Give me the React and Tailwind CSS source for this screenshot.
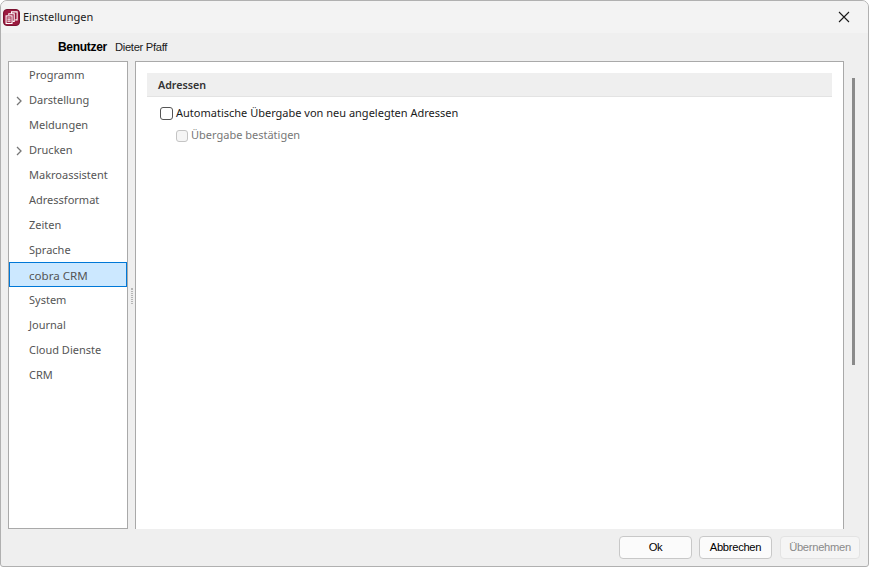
const items = [
  { label: "Programm" },
  { label: "Darstellung", arrow: true },
  { label: "Meldungen" },
  { label: "Drucken", arrow: true },
  { label: "Makroassistent" },
  { label: "Adressformat" },
  { label: "Zeiten" },
  { label: "Sprache" },
  { label: "cobra CRM", active: true },
  { label: "System" },
  { label: "Journal" },
  { label: "Cloud Dienste" },
  { label: "CRM" },
];

function AppIcon() {
  return (
    <div className="w-[17px] h-[17px] rounded-[4px] bg-[#9b1b3f] border border-[#7a1230] flex items-center justify-center">
      <svg width="13" height="13" viewBox="0 0 12 12" fill="none" stroke="#fff" strokeWidth="1">
        <path d="M6 2.5V.8h5.2v7.4H9.5" />
        <path d="M3.5 4V2.6h5v7H7" />
        <rect x="1" y="4.5" width="5.5" height="7" fill="#9b1b3f" />
        <path d="M2.2 6.5h3M2.2 8h3M2.2 9.5h3" />
      </svg>
    </div>
  );
}

export default function App() {
  return (
    <div className="w-[869px] h-[567px] flex flex-col bg-[#efefef] border border-[#b0b0b0] rounded-t-[7px] rounded-b-[3px] overflow-hidden text-[11px] text-[#1a1a1a] font-['Noto_Sans',sans-serif]">
      {/* title bar */}
      <div className="h-[32px] shrink-0 flex items-center pl-[2px] pr-[18px] bg-[#f3f3f3]">
        <AppIcon />
        <span className="ml-[3px] mb-[2px] text-[11px] leading-none">Einstellungen</span>
        <svg className="ml-auto" width="12" height="12" viewBox="0 0 12 12" stroke="#1a1a1a" strokeWidth="1.1">
          <path d="M1 1l10 10M11 1L1 11" />
        </svg>
      </div>

      {/* user */}
      <div className="h-[28px] shrink-0 flex items-center pl-[57px] font-['Liberation_Sans',sans-serif] text-[12px] tracking-[-0.3px]">
        <span className="font-bold text-black">Benutzer</span>
        <span className="ml-[8px] text-[11.2px]">Dieter Pfaff</span>
      </div>

      {/* content */}
      <div className="flex-1 min-h-0 flex pl-[7px]">
        {/* sidebar */}
        <div className="w-[120px] shrink-0 bg-white border border-[#a9a9a9]">
          {items.map((it) => (
            <div
              key={it.label}
              className={`h-[25px] flex items-center relative pt-[2px] text-[#555] ${
                it.active ? "pl-[19px] text-[11.6px] bg-[#cce8ff] border border-[#0078d7]" : "pl-[20px]"
              }`}
            >
              {it.arrow && (
                <svg className="absolute left-[7px] top-[9px]" width="7" height="10" viewBox="0 0 7 10" fill="none" stroke="#777" strokeWidth="1.3">
                  <path d="M1 1l4 4-4 4" />
                </svg>
              )}
              {it.label}
            </div>
          ))}
        </div>

        {/* splitter */}
        <div className="w-[7px] shrink-0 flex items-center justify-center">
          <div className="w-[2px] h-[16px] mt-[2px] border-x border-dotted border-[#b5b5b5]" />
        </div>

        {/* main panel */}
        <div className="w-[709px] shrink-0 bg-white border-x border-t border-[#a9a9a9] pt-[11px] pl-[11px] pr-[11px]">
          <div className="h-[24px] flex items-center pl-[11px] pt-[2px] bg-[#efefef] border-b border-[#e3e3e3] font-semibold text-[#333] text-[10.7px]">
            Adressen
          </div>
          <div className="mt-[8px] ml-[13px] flex items-center h-[17px]">
            <span className="w-[13px] h-[13px] rounded-[3px] border border-[#555] bg-white" />
            <span className="ml-[3px] text-[#1a1a1a]">Automatische Übergabe von neu angelegten Adressen</span>
          </div>
          <div className="mt-[5px] ml-[29px] flex items-center h-[17px]">
            <span className="w-[12px] h-[12px] rounded-[3px] border border-[#c4c4c4] bg-[#f5f5f5]" />
            <span className="ml-[3px] text-[#777]">Übergabe bestätigen</span>
          </div>
        </div>

        {/* scrollbar */}
        <div className="flex-1 pt-[17px] pl-[8px]">
          <div className="w-[3px] h-[287px] bg-[#8a8a8a]" />
        </div>
      </div>

      {/* buttons */}
      <div className="h-[37px] shrink-0 flex items-center justify-end gap-[8px] pr-[8px] font-['Liberation_Sans',sans-serif] text-[11.2px] tracking-[-0.3px]">
        <button className="w-[73px] h-[23px] -mr-[1px] bg-[#fbfbfb] border border-[#c8c8c8] rounded-[4px] text-black">Ok</button>
        <button className="w-[73px] h-[23px] bg-[#fbfbfb] border border-[#c8c8c8] rounded-[4px] text-black">Abbrechen</button>
        <button className="w-[80px] h-[23px] bg-[#f5f5f5] border border-[#e3e3e3] rounded-[4px] text-[#8a8a8a]">Übernehmen</button>
      </div>
    </div>
  );
}
